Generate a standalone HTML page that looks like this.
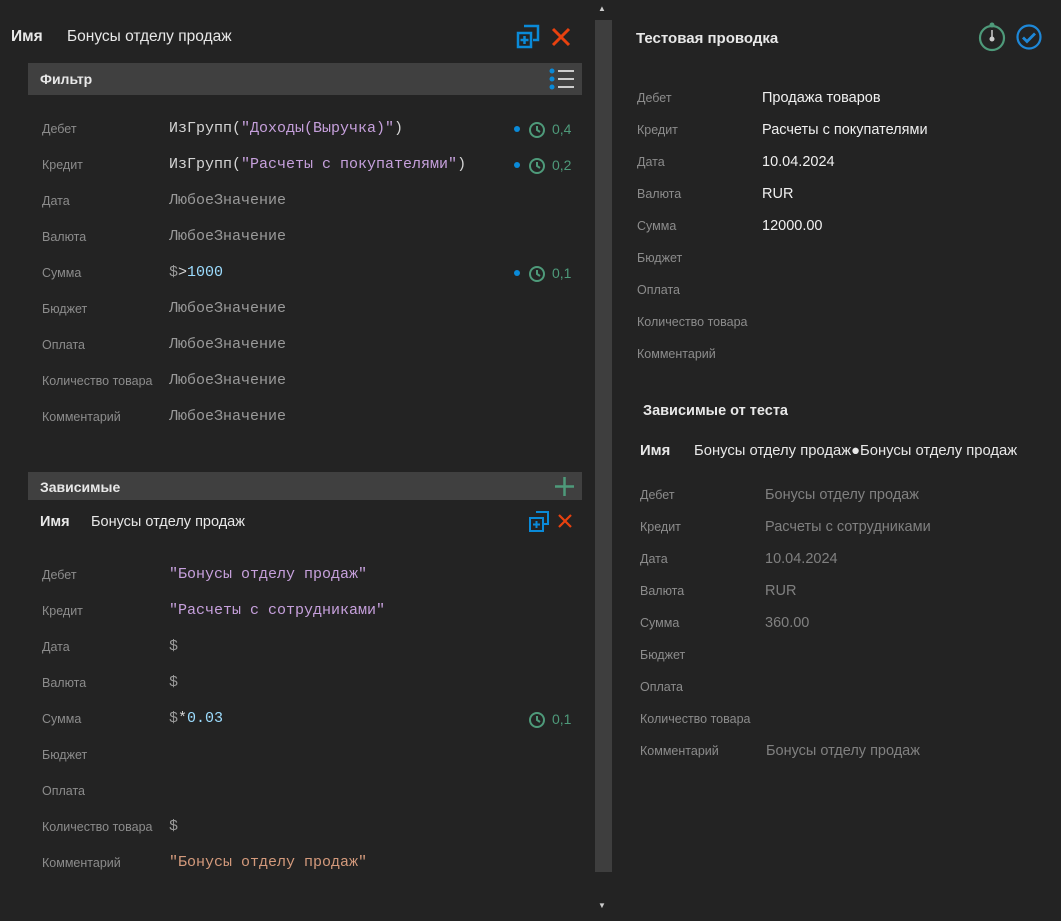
<!DOCTYPE html>
<html><head><meta charset="utf-8"><style>
body{margin:0;width:1061px;height:921px;background:#232323;font-family:"Liberation Sans","Noto Sans CJK JP",sans-serif;position:relative;overflow:hidden;color:#e8e8e8}
.a{position:absolute;white-space:nowrap}
.lb{font-size:12.5px;color:#8c8c8c}
.m{font-family:"Liberation Mono",monospace;font-size:15px;color:#d4d4d4}
.s{color:#c6a0dc}.o{color:#d49a7c}.n{color:#9cdcfe}.d{color:#9a9a9a}
.bar{position:absolute;background:#404040}
.g{color:#4e9a7a;font-size:14px}
.dot{position:absolute;width:6px;height:6px;border-radius:3px;background:#0a8ad8}
.v{font-size:14.5px;color:#f0f0f0}
.vg{font-size:14.5px;color:#808080}
</style></head><body>
<div class="a" style="left:598px;top:4px;font-size:8px;color:#ccc">▲</div>
<div class="a" style="left:598px;top:901px;font-size:8px;color:#ccc">▼</div>
<div class="bar" style="left:595px;top:20px;width:17px;height:852px;background:#3e3e3e"></div>

<div class="a" style="left:11px;top:28px;font-size:15.5px;font-weight:bold">Имя</div>
<div class="a" style="left:67px;top:28px;font-size:15.5px">Бонусы отделу продаж</div>
<svg class="a" style="left:516px;top:24px" width="26" height="26" viewBox="0 0 26 26" fill="none" stroke="#0a8ad8" stroke-width="2.5"><path d="M8 2h14v14h-5"/><rect x="2" y="9" width="13" height="14"/><path d="M8.5 12v8M4.5 16h8"/></svg>
<svg class="a" style="left:551px;top:27px" width="20" height="20" viewBox="0 0 20 20" stroke="#e8410f" stroke-width="3"><path d="M2 2L18 18M18 2L2 18"/></svg>

<div class="bar" style="left:28px;top:63px;width:554px;height:32px"></div>
<div class="a" style="left:40px;top:71px;font-size:14px;font-weight:bold">Фильтр</div>
<svg class="a" style="left:548px;top:67px" width="28" height="24" viewBox="0 0 28 24"><circle cx="4" cy="4" r="2.5" fill="#0a8ad8"/><circle cx="4" cy="12" r="2.5" fill="#0a8ad8"/><circle cx="4" cy="20" r="2.5" fill="#0a8ad8"/><path d="M10 4h16M10 12h16M10 20h16" stroke="#ccc" stroke-width="2"/></svg>

<div class="a lb" style="left:42px;top:122px">Дебет</div><div class="a m" style="left:169px;top:120px">ИзГрупп(<span class="s">"Доходы(Выручка)"</span>)</div>
<div class="a lb" style="left:42px;top:158px">Кредит</div><div class="a m" style="left:169px;top:156px">ИзГрупп(<span class="s">"Расчеты с покупателями"</span>)</div>
<div class="a lb" style="left:42px;top:194px">Дата</div><div class="a m d" style="left:169px;top:192px">ЛюбоеЗначение</div>
<div class="a lb" style="left:42px;top:230px">Валюта</div><div class="a m d" style="left:169px;top:228px">ЛюбоеЗначение</div>
<div class="a lb" style="left:42px;top:266px">Сумма</div><div class="a m" style="left:169px;top:264px"><span class="d">$</span>&gt;<span class="n">1000</span></div>
<div class="a lb" style="left:42px;top:302px">Бюджет</div><div class="a m d" style="left:169px;top:300px">ЛюбоеЗначение</div>
<div class="a lb" style="left:42px;top:338px">Оплата</div><div class="a m d" style="left:169px;top:336px">ЛюбоеЗначение</div>
<div class="a lb" style="left:42px;top:374px">Количество товара</div><div class="a m d" style="left:169px;top:372px">ЛюбоеЗначение</div>
<div class="a lb" style="left:42px;top:410px">Комментарий</div><div class="a m d" style="left:169px;top:408px">ЛюбоеЗначение</div>

<div class="dot" style="left:514px;top:126px"></div><svg class="a" style="left:528px;top:121px" width="18" height="18" viewBox="0 0 18 18" fill="none" stroke="#4e9a7a" stroke-width="2"><circle cx="9" cy="9" r="7"/><path d="M9 5v4l3 2"/></svg><div class="a g" style="left:552px;top:121px">0,4</div>
<div class="dot" style="left:514px;top:162px"></div><svg class="a" style="left:528px;top:157px" width="18" height="18" viewBox="0 0 18 18" fill="none" stroke="#4e9a7a" stroke-width="2"><circle cx="9" cy="9" r="7"/><path d="M9 5v4l3 2"/></svg><div class="a g" style="left:552px;top:157px">0,2</div>
<div class="dot" style="left:514px;top:270px"></div><svg class="a" style="left:528px;top:265px" width="18" height="18" viewBox="0 0 18 18" fill="none" stroke="#4e9a7a" stroke-width="2"><circle cx="9" cy="9" r="7"/><path d="M9 5v4l3 2"/></svg><div class="a g" style="left:552px;top:265px">0,1</div>

<div class="bar" style="left:28px;top:472px;width:554px;height:28px"></div>
<div class="a" style="left:40px;top:479px;font-size:14px;font-weight:bold">Зависимые</div>
<svg class="a" style="left:555px;top:477px" width="19" height="19" viewBox="0 0 19 19" stroke="#4e9a7a" stroke-width="2.5"><path d="M9.5 0v19M0 9.5h19"/></svg>
<div class="a" style="left:40px;top:514px;font-size:14.5px;font-weight:bold">Имя</div>
<div class="a" style="left:91px;top:514px;font-size:14.5px">Бонусы отделу продаж</div>
<svg class="a" style="left:529px;top:511px" width="21" height="21" viewBox="0 0 21 21" fill="none" stroke="#0a8ad8" stroke-width="2"><path d="M7 1h12v12h-4"/><rect x="1" y="7" width="13" height="13"/><path d="M7.5 10v7M4 13.5h7"/></svg>
<svg class="a" style="left:558px;top:514px" width="14" height="14" viewBox="0 0 14 14" stroke="#e8410f" stroke-width="2.2"><path d="M1 1L13 13M13 1L1 13"/></svg>

<div class="a lb" style="left:42px;top:568px">Дебет</div><div class="a m s" style="left:169px;top:566px">"Бонусы отделу продаж"</div>
<div class="a lb" style="left:42px;top:604px">Кредит</div><div class="a m s" style="left:169px;top:602px">"Расчеты с сотрудниками"</div>
<div class="a lb" style="left:42px;top:640px">Дата</div><div class="a m d" style="left:169px;top:638px">$</div>
<div class="a lb" style="left:42px;top:676px">Валюта</div><div class="a m d" style="left:169px;top:674px">$</div>
<div class="a lb" style="left:42px;top:712px">Сумма</div><div class="a m" style="left:169px;top:710px"><span class="d">$</span>*<span class="n">0.03</span></div>
<div class="a lb" style="left:42px;top:748px">Бюджет</div>
<div class="a lb" style="left:42px;top:784px">Оплата</div>
<div class="a lb" style="left:42px;top:820px">Количество товара</div><div class="a m d" style="left:169px;top:818px">$</div>
<div class="a lb" style="left:42px;top:856px">Комментарий</div><div class="a m o" style="left:169px;top:854px">"Бонусы отделу продаж"</div>
<svg class="a" style="left:528px;top:711px" width="18" height="18" viewBox="0 0 18 18" fill="none" stroke="#4e9a7a" stroke-width="2"><circle cx="9" cy="9" r="7"/><path d="M9 5v4l3 2"/></svg><div class="a g" style="left:552px;top:711px">0,1</div>

<div class="a" style="left:636px;top:30px;font-size:15px;font-weight:bold">Тестовая проводка</div>
<svg class="a" style="left:977px;top:20px" width="30" height="32" viewBox="0 0 30 32" fill="none"><circle cx="15" cy="18" r="12" stroke="#4e9a7a" stroke-width="2.2"/><circle cx="15" cy="5" r="2.5" fill="#4e9a7a"/><path d="M15 10v8" stroke="#ccc" stroke-width="1.5"/><circle cx="15" cy="19" r="2.5" fill="#ccc"/></svg>
<svg class="a" style="left:1016px;top:24px" width="26" height="26" viewBox="0 0 26 26" fill="none" stroke="#1e88d8" stroke-width="2.2"><circle cx="13" cy="13" r="11.5"/><path d="M7 13.5l4 4 8-8" stroke-width="2.8"/></svg>

<div class="a lb" style="left:637px;top:91px">Дебет</div><div class="a v" style="left:762px;top:90px">Продажа товаров</div>
<div class="a lb" style="left:637px;top:123px">Кредит</div><div class="a v" style="left:762px;top:122px">Расчеты с покупателями</div>
<div class="a lb" style="left:637px;top:155px">Дата</div><div class="a v" style="left:762px;top:154px">10.04.2024</div>
<div class="a lb" style="left:637px;top:187px">Валюта</div><div class="a v" style="left:762px;top:186px">RUR</div>
<div class="a lb" style="left:637px;top:219px">Сумма</div><div class="a v" style="left:762px;top:218px">12000.00</div>
<div class="a lb" style="left:637px;top:251px">Бюджет</div>
<div class="a lb" style="left:637px;top:283px">Оплата</div>
<div class="a lb" style="left:637px;top:315px">Количество товара</div>
<div class="a lb" style="left:637px;top:347px">Комментарий</div>

<div class="a" style="left:643px;top:403px;font-size:14.5px;font-weight:bold">Зависимые от теста</div>
<div class="a" style="left:640px;top:443px;font-size:14.8px;font-weight:bold">Имя</div>
<div class="a" style="left:694px;top:443px;font-size:14.8px">Бонусы отделу продаж●Бонусы отделу продаж</div>
<div class="a lb" style="left:640px;top:488px">Дебет</div><div class="a vg" style="left:765px;top:487px">Бонусы отделу продаж</div>
<div class="a lb" style="left:640px;top:520px">Кредит</div><div class="a vg" style="left:765px;top:519px">Расчеты с сотрудниками</div>
<div class="a lb" style="left:640px;top:552px">Дата</div><div class="a vg" style="left:765px;top:551px">10.04.2024</div>
<div class="a lb" style="left:640px;top:584px">Валюта</div><div class="a vg" style="left:765px;top:583px">RUR</div>
<div class="a lb" style="left:640px;top:616px">Сумма</div><div class="a vg" style="left:765px;top:615px">360.00</div>
<div class="a lb" style="left:640px;top:648px">Бюджет</div>
<div class="a lb" style="left:640px;top:680px">Оплата</div>
<div class="a lb" style="left:640px;top:712px">Количество товара</div>
<div class="a lb" style="left:640px;top:744px">Комментарий</div><div class="a vg" style="left:766px;top:743px">Бонусы отделу продаж</div>
</body></html>
